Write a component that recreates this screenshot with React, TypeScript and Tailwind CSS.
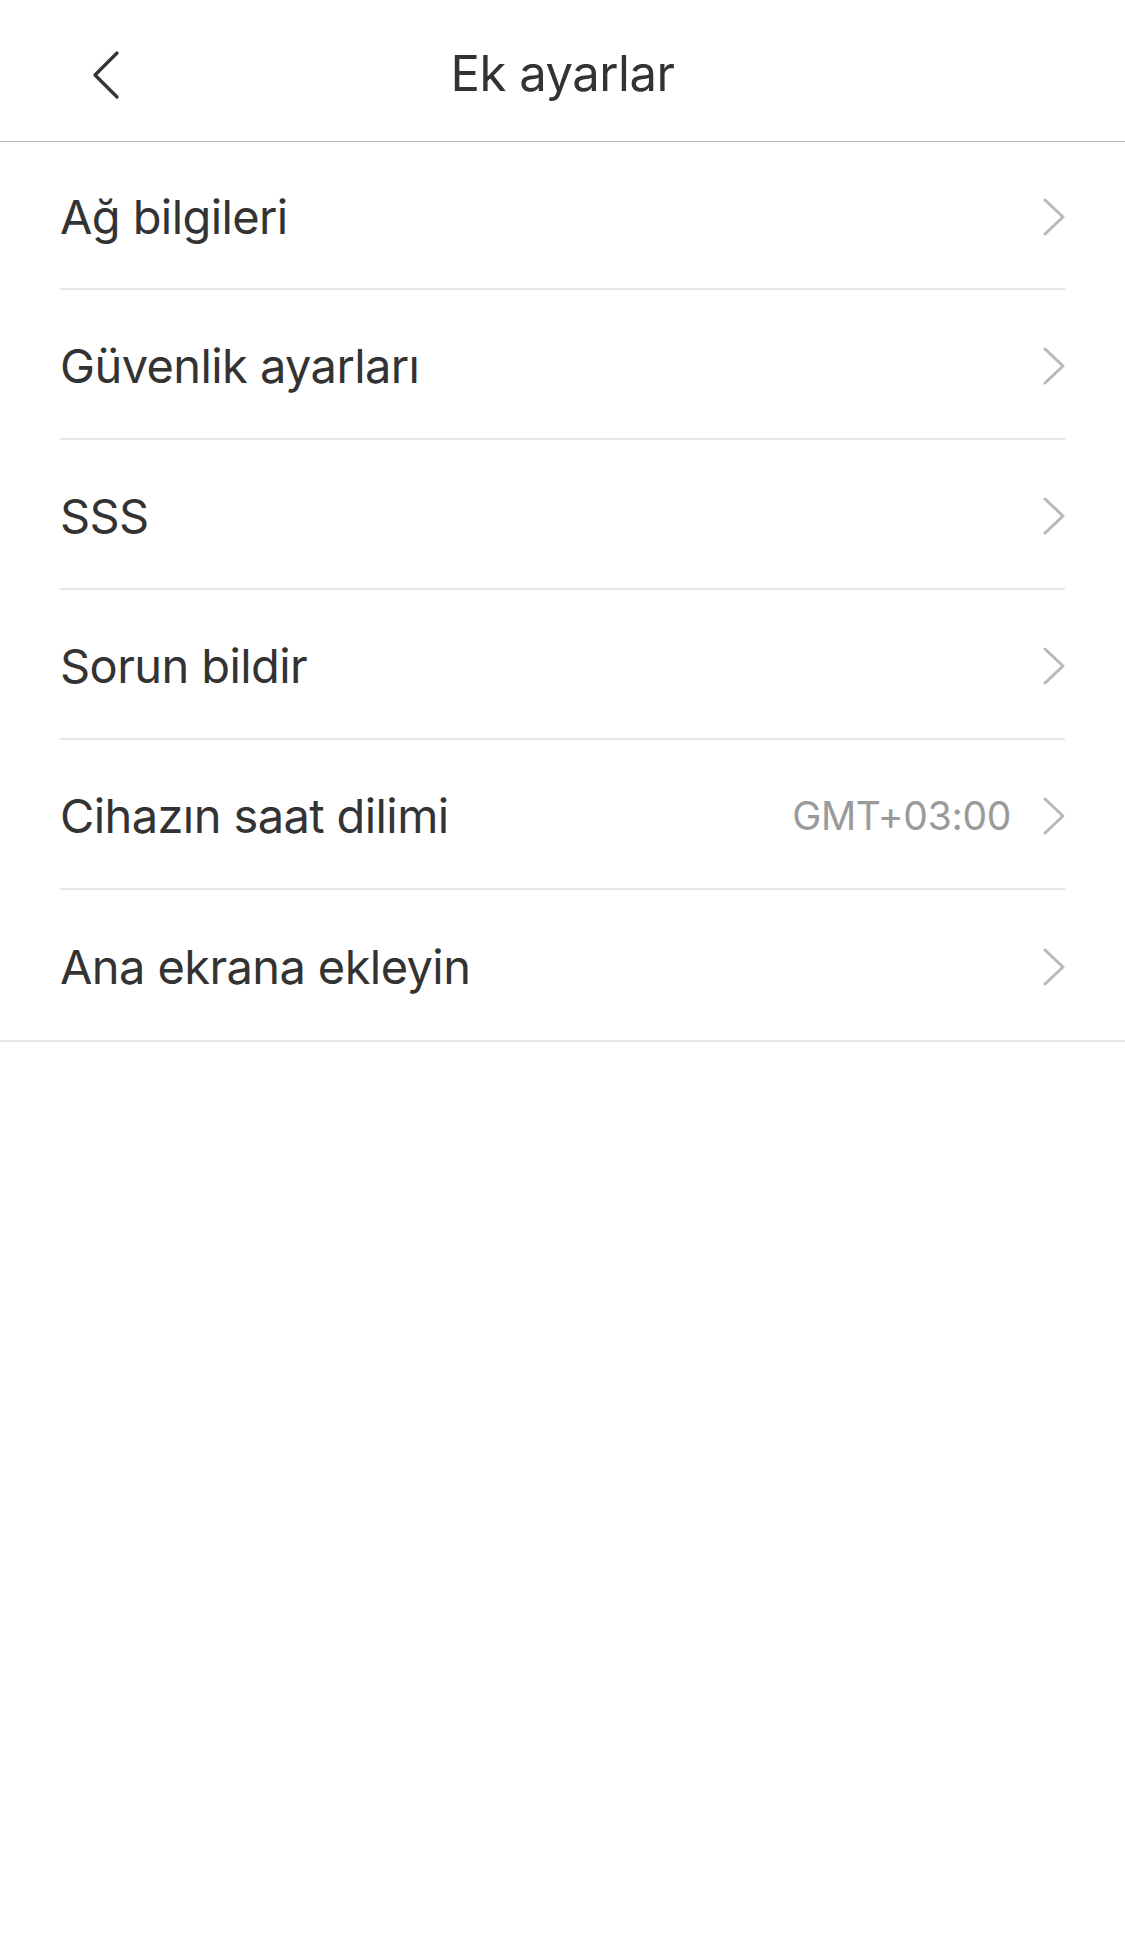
import React from 'react';

type Row = { label: string; value?: string };

const rows: Row[] = [
    { label: 'Ağ bilgileri' },
    { label: 'Güvenlik ayarları' },
    { label: 'SSS' },
    { label: 'Sorun bildir' },
    { label: 'Cihazın saat dilimi', value: 'GMT+03:00' },
    { label: 'Ana ekrana ekleyin' },
];

const Chevron = () => (
    <svg width="22" height="38" viewBox="0 0 22 38" fill="none" className="shrink-0 mt-[4px]">
        <path d="M2 2 L20 19 L2 36" stroke="#b8b8b8" strokeWidth="3" strokeLinecap="round" strokeLinejoin="round" />
    </svg>
);

const App: React.FC = () => {
    return (
        <div className="w-[1125px] min-h-[1950px] bg-white" style={{ fontFamily: 'Inter, "Noto Sans", sans-serif' }}>
            {/* header */}
            <div className="relative h-[142px] flex items-center justify-center border-b border-[#b5b5b5]">
                <div className="absolute left-[92px] top-[51px]">
                    <svg width="28" height="48" viewBox="0 0 28 48" fill="none">
                        <path d="M25 2 L3 24 L25 46" stroke="#333333" strokeWidth="3.2" strokeLinecap="round" strokeLinejoin="round" />
                    </svg>
                </div>
                <h1 className="text-[49px] text-[#333333] font-normal tracking-[-0.5px] mt-[6px]">Ek ayarlar</h1>
            </div>

            {/* list */}
            <div className="border-b-2 border-[#e5e5e5]">
                {rows.map((row, i) => (
                    <div key={i} className="px-[60px]">
                        <div className={(i === 0 ? 'h-[148px] ' : 'h-[150px] ') + "flex items-center " + (i < rows.length - 1 ? 'border-b-2 border-[#e6e6e6]' : '')}>
                            <span className="flex-1 pt-[5px] text-[47px] text-[#333333] tracking-[-0.6px]">{row.label}</span>
                            {row.value && (
                                <span className="mr-[32px] pt-[4px] text-[39px] text-[#9a9a9a] tracking-[-0.3px]">{row.value}</span>
                            )}
                            <Chevron />
                        </div>
                    </div>
                ))}
            </div>
        </div>
    );
};

export default App;
